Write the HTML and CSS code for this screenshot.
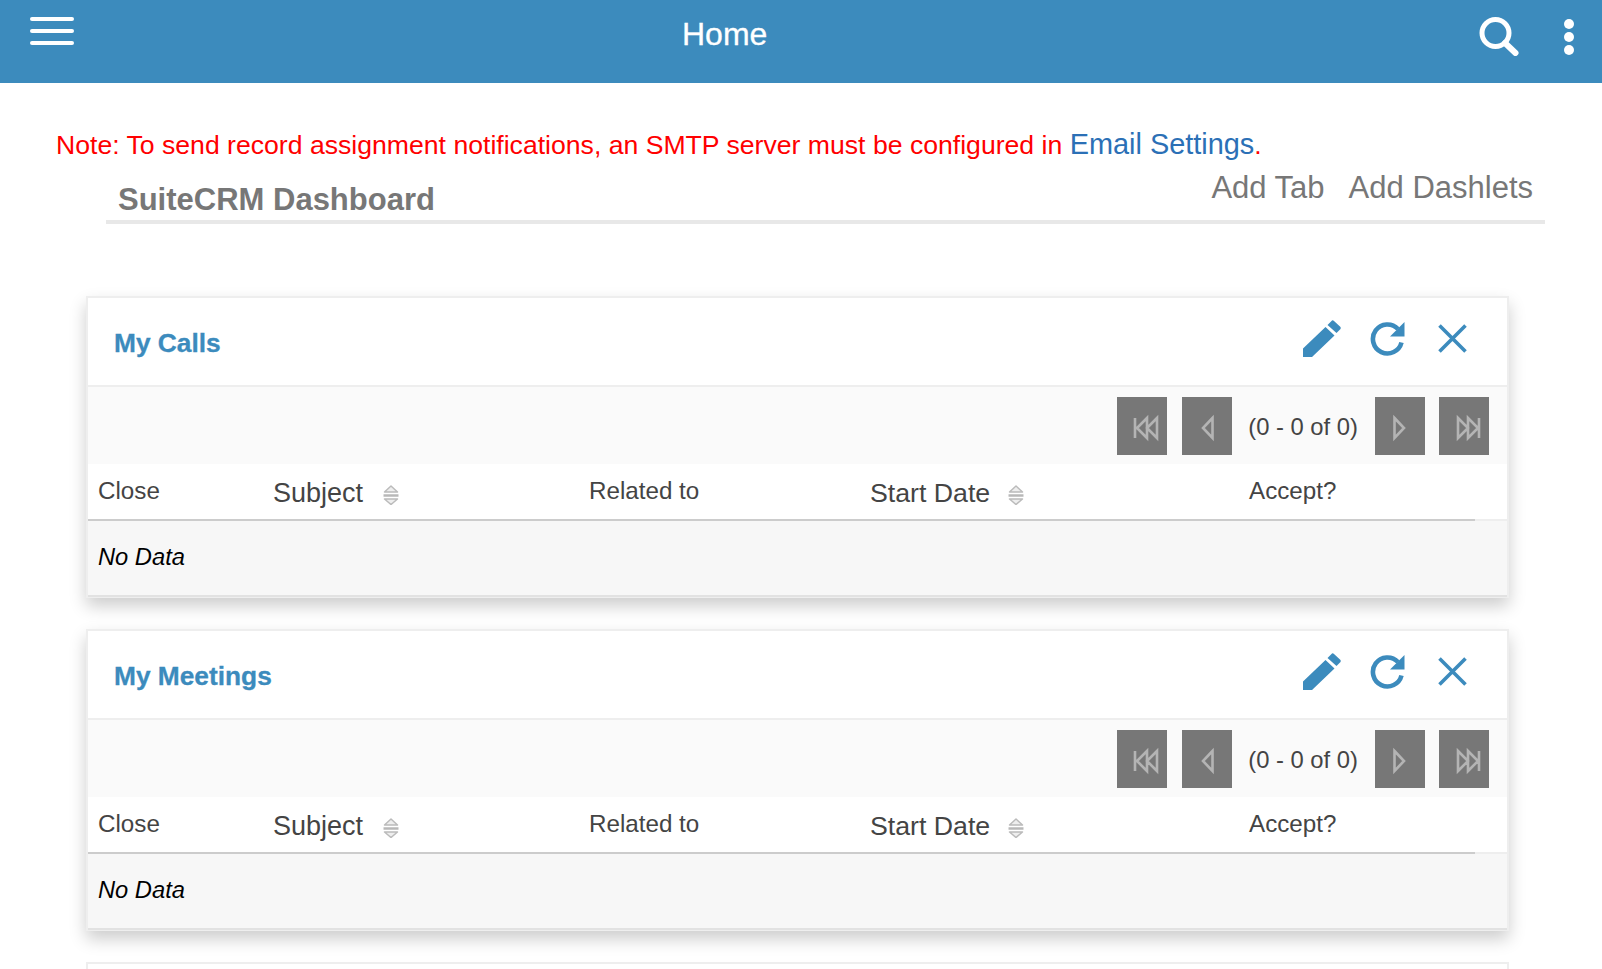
FILE: index.html
```html
<!DOCTYPE html>
<html lang="en">
<head>
<meta charset="utf-8">
<title>Home</title>
<link rel="stylesheet" href="styles.css">
</head>
<body>
<header class="topbar">
  <button class="burger" aria-label="Menu"><span></span><span></span><span></span></button>
  <h1 class="page-name">Home</h1>
  <svg class="search" viewBox="0 0 40 39" aria-label="Search"><circle cx="16.5" cy="16" r="13.5" fill="none" stroke="#fff" stroke-width="5"/><line x1="26" y1="26" x2="36.5" y2="36" stroke="#fff" stroke-width="6" stroke-linecap="round"/></svg>
  <div class="dots"><span></span><span></span><span></span></div>
</header>
<p class="note">Note: To send record assignment notifications, an SMTP server must be configured in <a href="#">Email Settings</a>.</p>
<div class="dash-head">
  <h2 class="dash-title">SuiteCRM Dashboard</h2>
  <nav class="dash-links"><a href="#">Add Tab</a><a href="#">Add Dashlets</a></nav>
</div>
<main class="dashlets">

  <section class="card">
    <div class="card-head">
      <h3 class="card-title">My Calls</h3>
      <div class="card-tools">
        <svg class="i-pencil" viewBox="0 0 38 37"><path d="M29 0.5 Q30 0 31 1 L37.5 7 Q38 8 37.5 9 L33.5 13 L24.5 5 Z M22.5 7 L31.5 15.5 L9 37 L0 37 L0 28.5 Z" fill="#3c8bbd"/></svg>
        <svg class="i-refresh" viewBox="0 0 35 35"><path d="M28 8 A14.5 14.5 0 1 0 31.5 21.5" fill="none" stroke="#3c8bbd" stroke-width="4.6"/><polygon points="34.5,1 34.5,15.5 20,15.5" fill="#3c8bbd"/></svg>
        <svg class="i-close" viewBox="0 0 29 29"><path d="M1.5 1.5 L27.5 27.5 M27.5 1.5 L1.5 27.5" stroke="#3c8bbd" stroke-width="3.6" fill="none"/></svg>
      </div>
    </div>
    <div class="pager">
      <button class="pg"><svg viewBox="0 0 50 58"><path d="M18 21 V41 M30 21 L20 31 L30 41 Z M40 21 L30 31 L40 41 Z"/></svg></button>
      <button class="pg pg-prev"><svg viewBox="0 0 50 58"><path d="M30.5 21 L21 31 L30.5 41 Z"/></svg></button>
      <span class="pg-count">(0 - 0 of 0)</span>
      <button class="pg pg-next"><svg viewBox="0 0 50 58"><path d="M19.5 21 L29 31 L19.5 41 Z"/></svg></button>
      <button class="pg"><svg viewBox="0 0 50 58"><path d="M19 21 L29 31 L19 41 Z M29 21 L39 31 L29 41 Z M40 21 V41"/></svg></button>
    </div>
    <table class="list">
      <thead>
        <tr>
          <th class="c-close small">Close</th>
          <th class="c-subject">Subject<svg class="sort" viewBox="0 0 17 20"><path class="tri" d="M8 1 L14.5 7 H1.5 Z M1.5 14 H14.5 L8 19.5 Z"/><path class="bar" d="M0.5 10.5 H15.5"/></svg></th>
          <th class="c-related small">Related to</th>
          <th class="c-start">Start Date<svg class="sort" viewBox="0 0 17 20"><path class="tri" d="M8 1 L14.5 7 H1.5 Z M1.5 14 H14.5 L8 19.5 Z"/><path class="bar" d="M0.5 10.5 H15.5"/></svg></th>
          <th class="c-accept small">Accept?</th>
          <th class="c-fill"></th>
        </tr>
      </thead>
      <tbody><tr><td colspan="6">No Data</td></tr></tbody>
    </table>
  </section>

  <section class="card">
    <div class="card-head">
      <h3 class="card-title">My Meetings</h3>
      <div class="card-tools">
        <svg class="i-pencil" viewBox="0 0 38 37"><path d="M29 0.5 Q30 0 31 1 L37.5 7 Q38 8 37.5 9 L33.5 13 L24.5 5 Z M22.5 7 L31.5 15.5 L9 37 L0 37 L0 28.5 Z" fill="#3c8bbd"/></svg>
        <svg class="i-refresh" viewBox="0 0 35 35"><path d="M28 8 A14.5 14.5 0 1 0 31.5 21.5" fill="none" stroke="#3c8bbd" stroke-width="4.6"/><polygon points="34.5,1 34.5,15.5 20,15.5" fill="#3c8bbd"/></svg>
        <svg class="i-close" viewBox="0 0 29 29"><path d="M1.5 1.5 L27.5 27.5 M27.5 1.5 L1.5 27.5" stroke="#3c8bbd" stroke-width="3.6" fill="none"/></svg>
      </div>
    </div>
    <div class="pager">
      <button class="pg"><svg viewBox="0 0 50 58"><path d="M18 21 V41 M30 21 L20 31 L30 41 Z M40 21 L30 31 L40 41 Z"/></svg></button>
      <button class="pg pg-prev"><svg viewBox="0 0 50 58"><path d="M30.5 21 L21 31 L30.5 41 Z"/></svg></button>
      <span class="pg-count">(0 - 0 of 0)</span>
      <button class="pg pg-next"><svg viewBox="0 0 50 58"><path d="M19.5 21 L29 31 L19.5 41 Z"/></svg></button>
      <button class="pg"><svg viewBox="0 0 50 58"><path d="M19 21 L29 31 L19 41 Z M29 21 L39 31 L29 41 Z M40 21 V41"/></svg></button>
    </div>
    <table class="list">
      <thead>
        <tr>
          <th class="c-close small">Close</th>
          <th class="c-subject">Subject<svg class="sort" viewBox="0 0 17 20"><path class="tri" d="M8 1 L14.5 7 H1.5 Z M1.5 14 H14.5 L8 19.5 Z"/><path class="bar" d="M0.5 10.5 H15.5"/></svg></th>
          <th class="c-related small">Related to</th>
          <th class="c-start">Start Date<svg class="sort" viewBox="0 0 17 20"><path class="tri" d="M8 1 L14.5 7 H1.5 Z M1.5 14 H14.5 L8 19.5 Z"/><path class="bar" d="M0.5 10.5 H15.5"/></svg></th>
          <th class="c-accept small">Accept?</th>
          <th class="c-fill"></th>
        </tr>
      </thead>
      <tbody><tr><td colspan="6">No Data</td></tr></tbody>
    </table>
  </section>

  <section class="card card-empty"></section>
</main>
</body>
</html>
```

FILE: styles.css
```css
* { box-sizing: border-box; }
html, body { margin: 0; height: 969px; overflow: hidden; background: #fff; }
body { font-family: "Liberation Sans", Arial, sans-serif; color: #444; }

.topbar {
  display: flex;
  align-items: flex-start;
  height: 83px;
  padding: 15px 28px 0 30px;
  background: #3c8bbd;
}
.burger {
  display: flex;
  flex-direction: column;
  justify-content: space-between;
  width: 44px;
  height: 28px;
  margin-top: 2px;
  padding: 0;
  border: 0;
  background: none;
}
.burger span { display: block; height: 4px; border-radius: 2px; background: #fff; }
.page-name {
  margin: 1px 0 0 608px;
  font-size: 32px;
  line-height: 36px;
  font-weight: 400;
  color: #fff;
  -webkit-text-stroke: .3px #fff;
}
.search { width: 40px; height: 39px; margin: 2px 0 0 auto; }
.dots {
  display: flex;
  flex-direction: column;
  gap: 3px;
  margin: 4px 0 0 45px;
}
.dots span { width: 10px; height: 10px; border-radius: 50%; background: #fff; }

.note {
  height: 36px;
  margin: 44px 0 -1px 56px;
  font-size: 26.62px;
  line-height: 36px;
  color: #f00;
  white-space: nowrap;
}
.note a { font-size: 28.9px; line-height: 30px; color: #2b70b6; text-decoration: none; }

.dash-head {
  display: flex;
  justify-content: space-between;
  align-items: flex-end;
  height: 62px;
  margin: 0 57px 0 106px;
  padding: 0 12px 2px;
  border-bottom: 4px solid #e8e8e8;
}
.dash-title {
  margin: 0;
  font-size: 31px;
  line-height: 36px;
  font-weight: 700;
  color: #777;
}
.dash-links { display: flex; gap: 24px; padding-bottom: 12px; }
.dash-links a { font-size: 31px; line-height: 36px; color: #777; text-decoration: none; }

.dashlets {
  display: flex;
  flex-direction: column;
  gap: 31px;
  width: 1423px;
  margin: 72px 0 0 86px;
}
.card {
  flex: none;
  height: 302px;
  border: 2px solid #eee;
  border-bottom-width: 1px;
  background: #fff;
  box-shadow: 0 8px 16px rgba(0, 0, 0, .2);
}
.card-empty { height: 7px; border-bottom: 0; box-shadow: none; }
.card-head {
  display: flex;
  justify-content: space-between;
  height: 89px;
  border-bottom: 2px solid #eee;
}
.card-title {
  margin: 28.5px 0 0 26px;
  font-size: 26.3px;
  line-height: 32px;
  font-weight: 700;
  color: #3c8bbd;
  -webkit-text-stroke: .3px #3c8bbd;
}
.card-tools { display: flex; align-items: flex-start; padding: 22px 0 0; }
.i-pencil { width: 38px; height: 37px; }
.i-refresh { width: 35px; height: 35px; margin: 1px 0 0 29px; }
.i-close { width: 29px; height: 29px; margin: 4px 40px 0 33px; }

.pager {
  display: flex;
  justify-content: flex-end;
  align-items: flex-start;
  height: 77px;
  padding: 10px 18px 0 0;
  background: #fafafa;
}
.pg {
  flex: none;
  width: 50px;
  height: 58px;
  margin-left: 14px;
  padding: 0;
  border: 0;
  background: #777;
}
.pg svg { display: block; width: 50px; height: 58px; }
.pg path { fill: none; stroke: #b4b4b4; stroke-width: 2.6; }
.pg-prev { margin-left: 15px; }
.pg-next { margin-left: 17px; }
.pg-count {
  margin: 0 0 0 16px;
  font-size: 23.8px;
  line-height: 60px;
  color: #444;
  white-space: nowrap;
}

.list { width: 100%; border-collapse: separate; border-spacing: 0; table-layout: fixed; }
.list th {
  height: 57px;
  padding: 13px 0 0 10px;
  border-bottom: 2px solid #ccc;
  background: #fff;
  font-size: 27px;
  font-weight: 400;
  text-align: left;
  color: #444;
  vertical-align: top;
  line-height: 32px;
}
.list th.small { font-size: 24.2px; padding-top: 11px; }
.c-close { width: 175px; }
.c-subject { width: 316px; }
.c-related { width: 281px; }
.c-start { width: 379px; }
.c-accept { width: 236px; }
.list th.c-start { font-size: 26.7px; }
.list th.c-fill { width: 32px; border-bottom-color: #eee; padding: 0; }
.sort { width: 17px; height: 20px; margin-left: 20px; vertical-align: -3px; }
.c-start .sort { margin-left: 18px; }
.sort .tri { fill: #eee; stroke: #bbb; stroke-width: 1.5; stroke-linejoin: round; }
.sort .bar { fill: none; stroke: #b8b8b8; stroke-width: 2.5; }
.list td {
  height: 76px;
  padding: 0 0 2px 10px;
  border-bottom: 2px solid #e2e2e2;
  background: #f7f7f7;
  font-size: 23.7px;
  font-style: italic;
  color: #000;
}
```
